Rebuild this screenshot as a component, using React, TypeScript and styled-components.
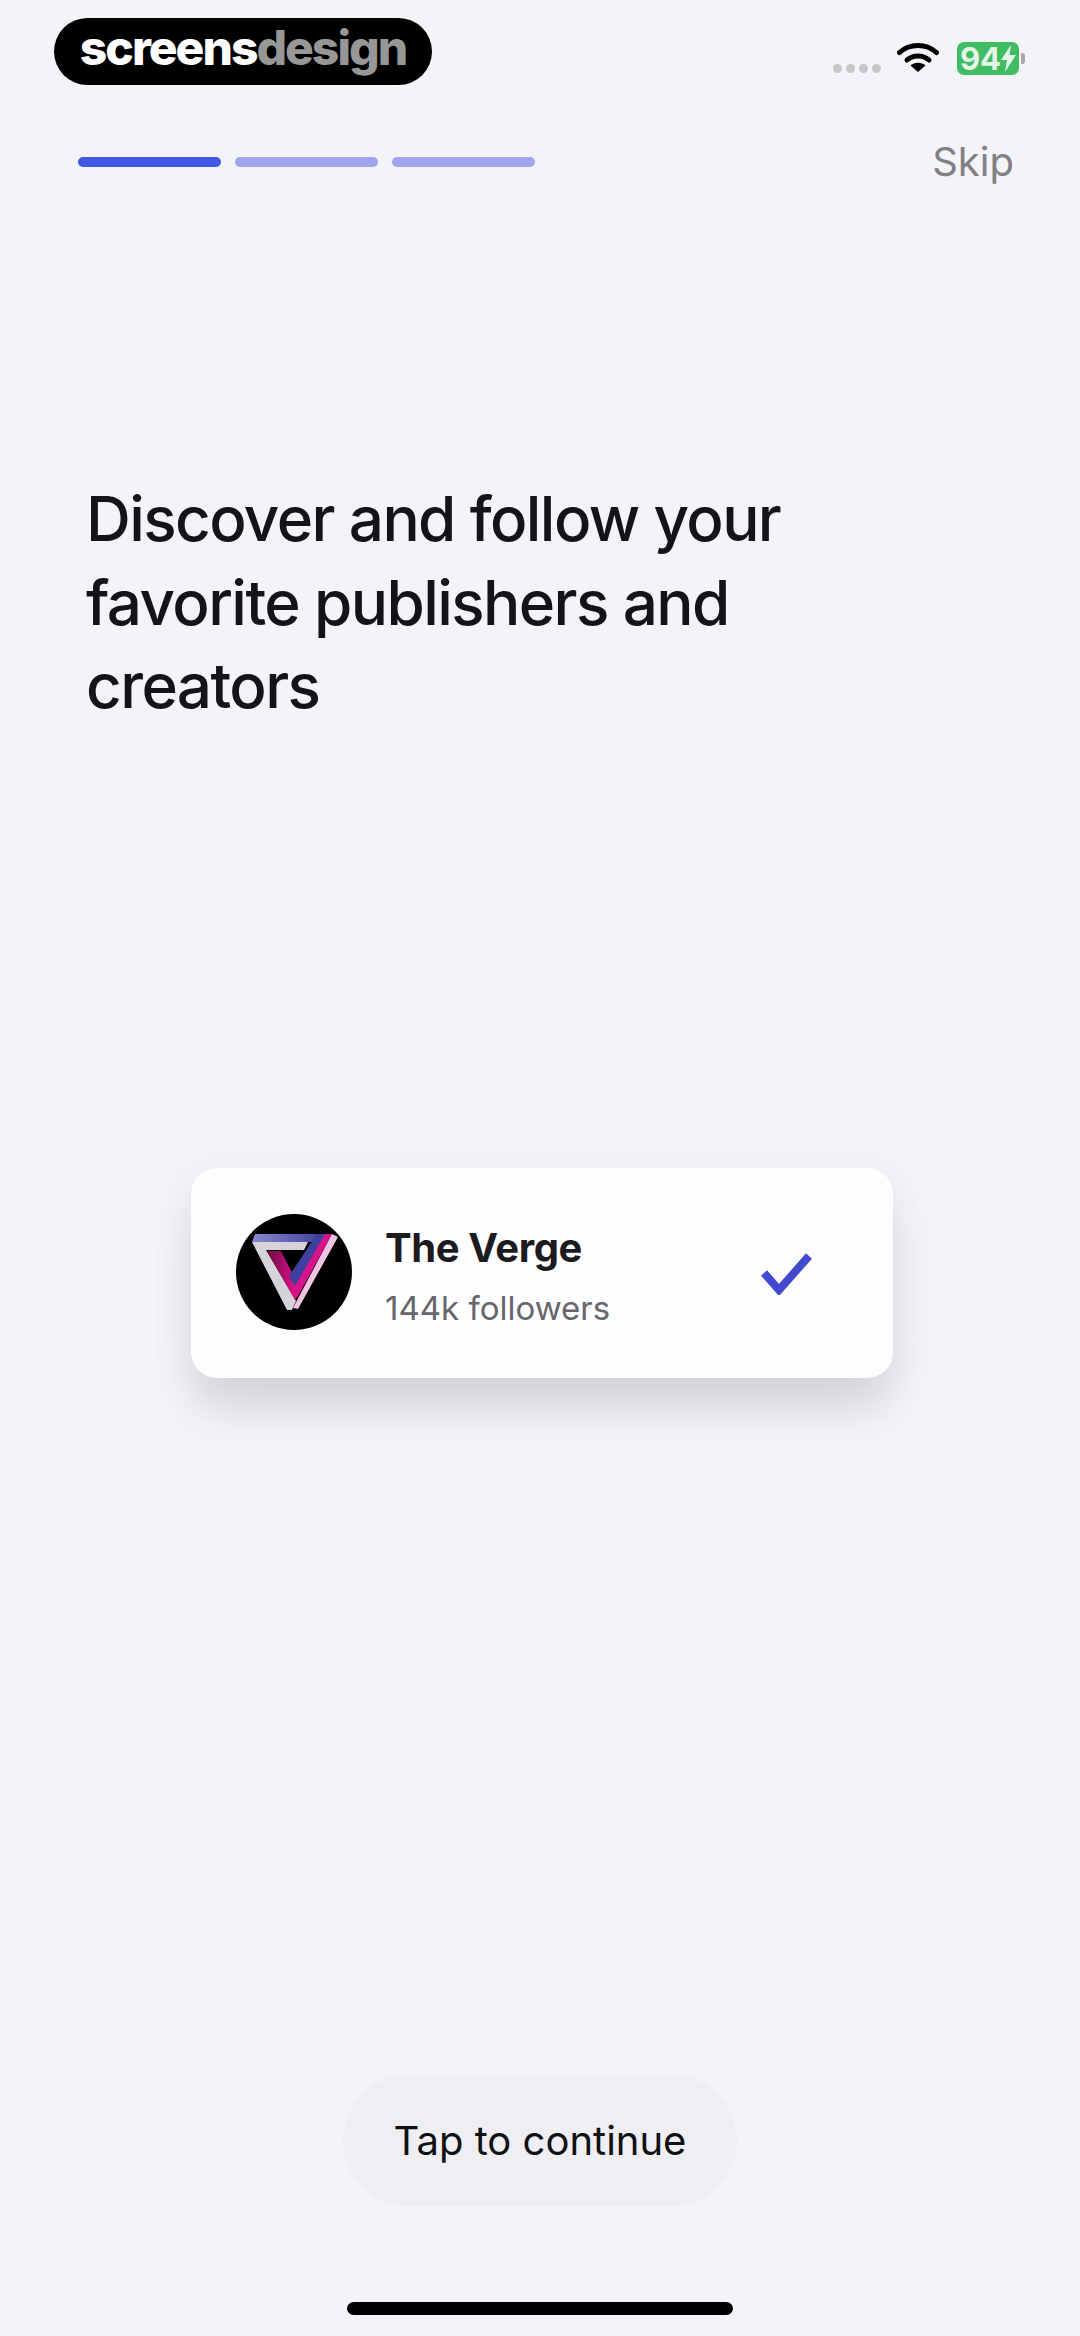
import React from "react";
import styled, { createGlobalStyle } from "styled-components";

const GlobalStyle = createGlobalStyle`
  html, body {
    margin: 0;
    padding: 0;
    background: #f4f3f8;
  }
  * { box-sizing: border-box; }
`;

const Screen = styled.div`
  width: 1080px;
  height: 2336px;
  background: #f4f3f8;
  font-family: Inter, "Liberation Sans", sans-serif;
  display: flex;
  flex-direction: column;
  overflow: hidden;
`;

const TopBar = styled.div`
  display: flex;
  justify-content: space-between;
  padding: 18px 61px 0 54px;
  height: 135px;
`;

const Watermark = styled.div`
  width: 378px;
  height: 67px;
  border-radius: 34px;
  background: #000;
  display: flex;
  align-items: center;
  justify-content: center;
  padding-bottom: 9px;
  font-size: 48px;
  font-weight: 800;
  letter-spacing: -2px;
  color: #fff;
`;

const WatermarkGrey = styled.span`
  color: #979797;
`;

const StatusIcons = styled.div`
  display: flex;
  align-items: flex-start;
  padding-top: 24px;
`;

const SignalDots = styled.div`
  display: flex;
  gap: 4px;
  margin-top: 22px;
  margin-right: 16px;
`;

const SignalDot = styled.span`
  width: 9px;
  height: 9px;
  border-radius: 50%;
  background: #c6c6c8;
`;

const Battery = styled.div`
  width: 62px;
  height: 33px;
  margin-left: 18px;
  border-radius: 7px;
  background: #40bd63;
  color: #e4f6e6;
  font-size: 31px;
  font-weight: 700;
  line-height: 33px;
  display: flex;
  align-items: center;
  justify-content: center;
  position: relative;
  &::after {
    content: "";
    position: absolute;
    left: 64px;
    top: 11px;
    width: 4px;
    height: 11px;
    border-radius: 0 3px 3px 0;
    background: #a8a8aa;
  }
`;

const ProgressRow = styled.div`
  display: flex;
  align-items: center;
  padding: 0 66px 0 78px;
  height: 54px;
`;

const Segment = styled.div<{ $active?: boolean }>`
  width: 143px;
  height: 10px;
  margin-right: 14px;
  border-radius: 5px;
  background: ${(p) => (p.$active ? "#4359e6" : "#9fa5ef")};
`;

const Skip = styled.div`
  margin-left: auto;
  margin-bottom: 2px;
  font-size: 40px;
  color: #808085;
`;

const Title = styled.h1`
  margin: 288px 0 0 86px;
  width: 800px;
  font-size: 62px;
  line-height: 83.5px;
  font-weight: 500;
  letter-spacing: -1.6px;
  color: #141418;
`;

const Card = styled.div`
  width: 702px;
  height: 210px;
  margin: 440px 0 0 191px;
  padding: 46px 80px 0 45px;
  border-radius: 26px;
  background: #fdfcfe;
  box-shadow: 0 36px 44px -4px rgba(0, 0, 0, 0.1), 0 12px 44px 8px rgba(0, 0, 0, 0.04);
  display: flex;
  align-items: flex-start;
`;

const Avatar = styled.svg`
  width: 116px;
  height: 116px;
  flex: none;
`;

const CardText = styled.div`
  margin-left: 33px;
  flex: 1;
`;

const Name = styled.div`
  font-size: 40px;
  line-height: 48px;
  margin-top: 10px;
  font-weight: 700;
  letter-spacing: -0.4px;
  color: #1b1b20;
`;

const Followers = styled.div`
  font-size: 33px;
  line-height: 40px;
  margin-top: 16px;
  color: #66666b;
`;

const Check = styled.svg`
  width: 52px;
  height: 42px;
  margin-top: 39px;
  flex: none;
`;

const ContinueButton = styled.div`
  width: 394px;
  height: 131px;
  margin: 697px 0 0 343px;
  border-radius: 66px;
  background: #efeef3;
  display: flex;
  align-items: center;
  justify-content: center;
  font-size: 40px;
  color: #111114;
`;

const HomeBar = styled.div`
  width: 386px;
  height: 13px;
  margin: 96px 0 0 347px;
  border-radius: 7px;
  background: #000;
`;

const WifiIcon = () => (
  <svg width="42" height="31" viewBox="0 0 42 31" fill="none">
    <path d="M2.5 10.5C12.5 1 29.5 1 39.5 10.5" stroke="#000" strokeWidth="5" strokeLinecap="round" />
    <path d="M10 18C16 12.5 26 12.5 32 18" stroke="#000" strokeWidth="5" strokeLinecap="round" />
    <path d="M21 30L13.5 23.5C17.5 19.8 24.5 19.8 28.5 23.5Z" fill="#000" />
  </svg>
);

const BoltIcon = () => (
  <svg width="15" height="27" viewBox="0 0 15 27">
    <path d="M10 0L0 15H6L4 27L15 10H8.5Z" fill="#e4f6e6" />
  </svg>
);

const VergeLogo = () => (
  <Avatar viewBox="16 14 116 116">
    <defs>
      <linearGradient id="bar" x1="0" y1="0" x2="1" y2="0">
        <stop offset="0" stopColor="#8a88d0" />
        <stop offset="1" stopColor="#3b3a95" />
      </linearGradient>
      <linearGradient id="inner" x1="0" y1="0" x2="1" y2="0.3">
        <stop offset="0" stopColor="#6d0c48" />
        <stop offset="1" stopColor="#e0108a" />
      </linearGradient>
    </defs>
    <circle cx="74" cy="72" r="58" fill="#000" />
    <polygon points="35,34 108,34 103,42 32,42" fill="url(#bar)" />
    <polygon points="32,42 88,42 84,50 46,50 76,101 72,110 67,110" fill="#d5d3d8" />
    <polygon points="47,51 61,51 80,88 75,100" fill="url(#inner)" />
    <polygon points="104,34 112,34 77,98 72,90" fill="#d8128a" />
    <polygon points="97,34 105,34 75,86 69,76" fill="#3f3f9e" />
    <polygon points="112,34 118,37 78,109 73,108" fill="#f2c4e2" />
  </Avatar>
);

export default function App() {
  return (
    <Screen>
      <GlobalStyle />
      <TopBar>
        <Watermark>
          screens<WatermarkGrey>design</WatermarkGrey>
        </Watermark>
        <StatusIcons>
          <SignalDots>
            {[0, 1, 2, 3].map((i) => (
              <SignalDot key={i} />
            ))}
          </SignalDots>
          <WifiIcon />
          <Battery>
            94
            <BoltIcon />
          </Battery>
        </StatusIcons>
      </TopBar>
      <ProgressRow>
        <Segment $active />
        <Segment />
        <Segment />
        <Skip>Skip</Skip>
      </ProgressRow>
      <Title>
        Discover and follow your
        <br />
        favorite publishers and
        <br />
        creators
      </Title>
      <Card>
        <VergeLogo />
        <CardText>
          <Name>The Verge</Name>
          <Followers>144k followers</Followers>
        </CardText>
        <Check viewBox="0 0 52 42" fill="none">
          <polyline points="3,20 18,37 48,3" stroke="#4349cf" strokeWidth="8" strokeLinejoin="miter" />
        </Check>
      </Card>
      <ContinueButton>Tap to continue</ContinueButton>
      <HomeBar />
    </Screen>
  );
}
